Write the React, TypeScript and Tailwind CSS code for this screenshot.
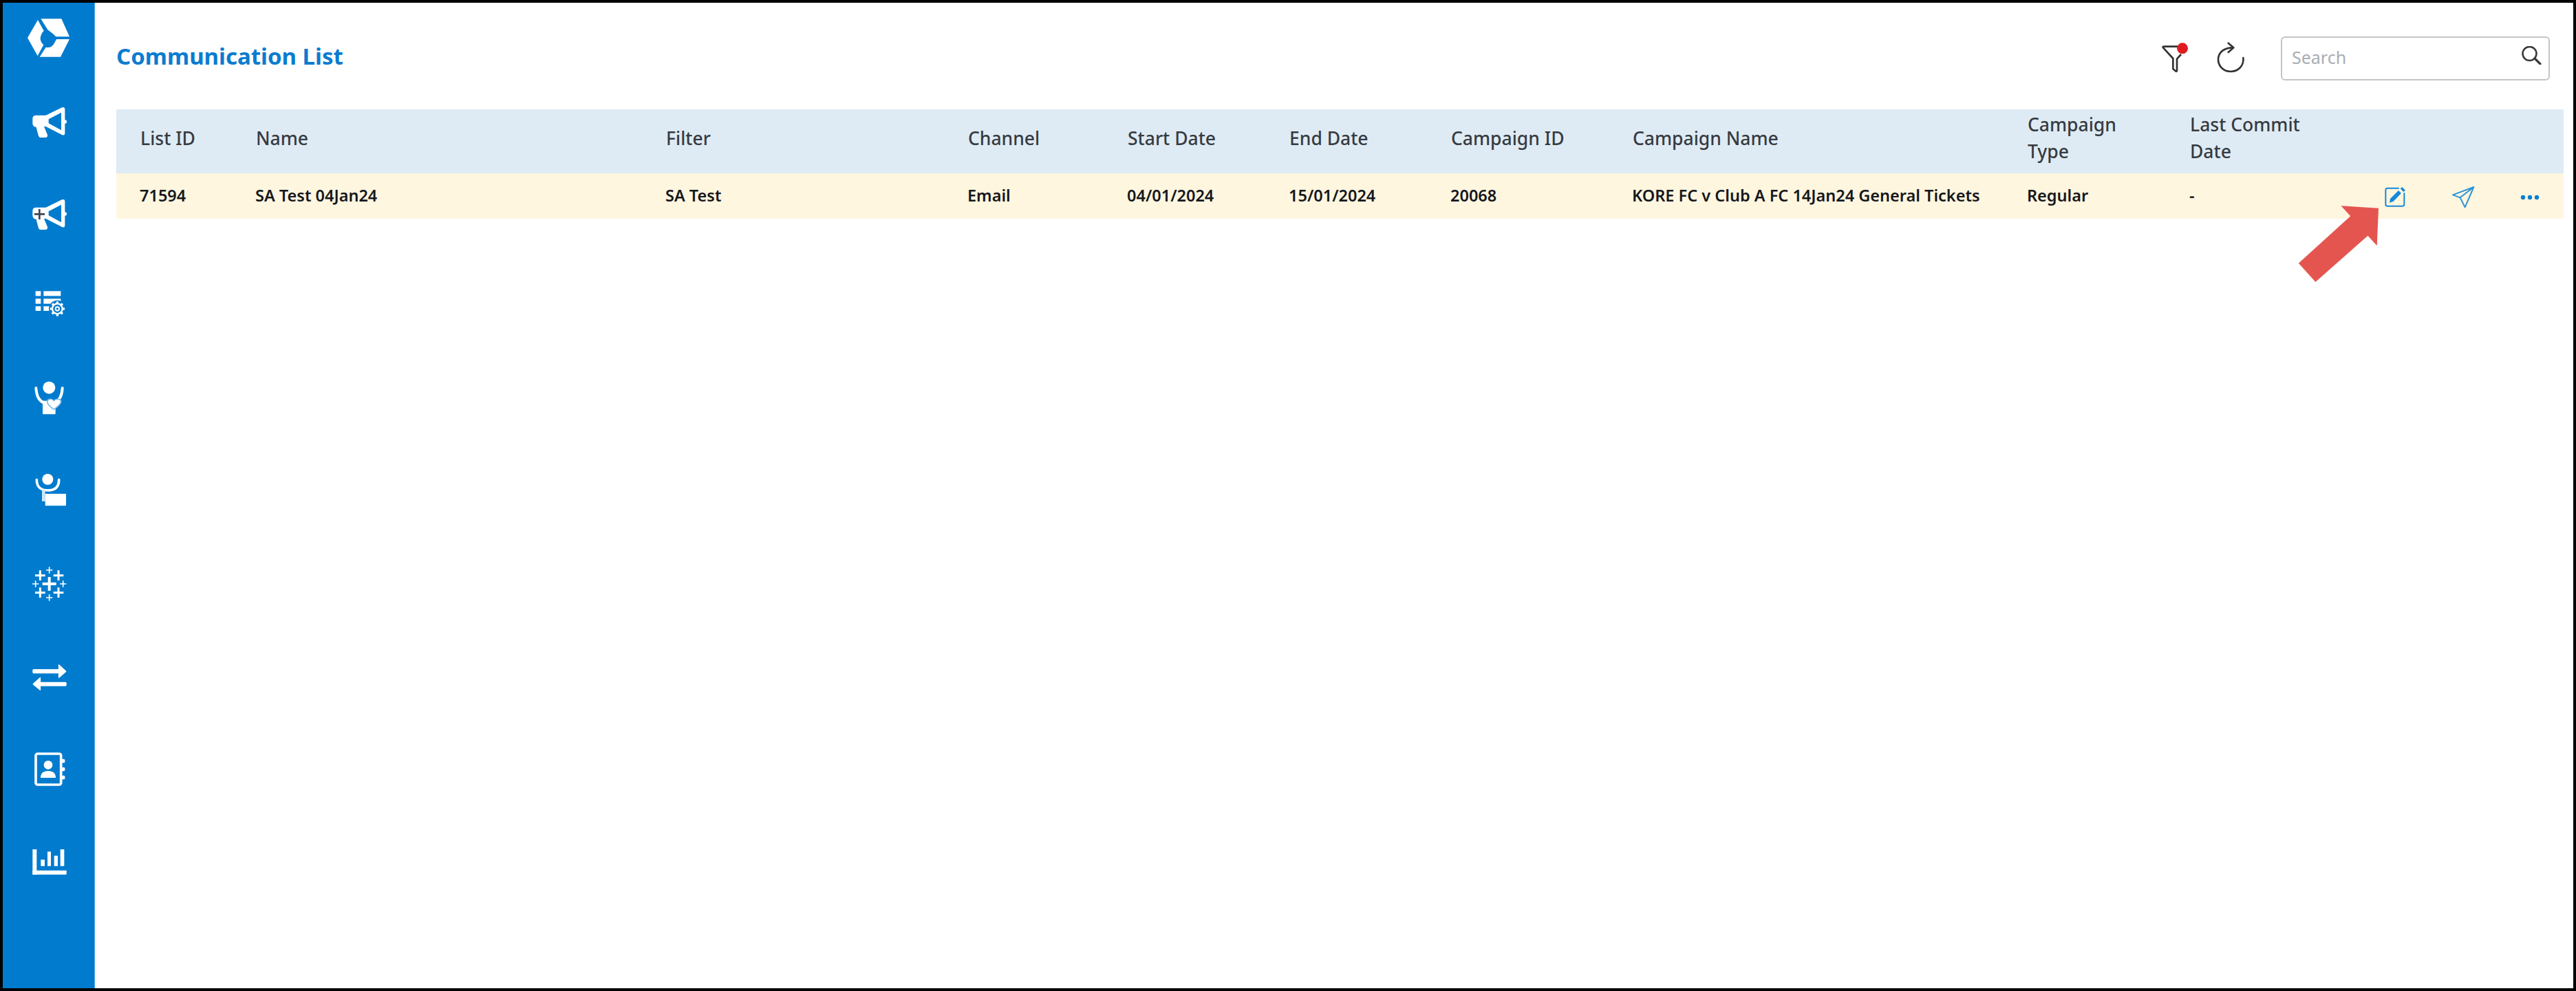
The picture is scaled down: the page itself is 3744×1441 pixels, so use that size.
const Megaphone = ({ plus }: { plus?: boolean }) => (
  <svg width="64" height="45" viewBox="117 465 192 135" className="block">
    <path
      fill="#fff"
      d="M142 518 Q142 503 157 503 L205 503 L205 552 L192 552 L207 588 Q209 600 197 600 L178 600 Q170 600 167 590 L158 555 Q142 553 142 538 Z"
    />
    <path
      fill="#fff"
      fillRule="evenodd"
      d="M200 503 L270 469 Q283 464 283 478 L283 580 Q283 594 270 588 L200 552 Z M212 520 L267 491 L267 568 L212 538 Z"
    />
    <circle cx="283" cy="531" r="8" fill="#fff" />
    {plus && (
      <path d="M150 532 H195 M172 510 V555" stroke="#3d4650" strokeWidth="8" fill="none" />
    )}
  </svg>
);

const Logo = () => (
  <svg width="64" height="56" viewBox="117 81 192 168" className="block">
    <path fill="#fff" d="M120 165 L165 87 L191 134 Q176 150 176 170 Q178 185 190 196 L164 244 Z" />
    <path fill="#fff" d="M178 82 L268 82 L303 160 L244 160 Q226 142 208 130 Z" />
    <path fill="#fff" d="M303 171 L264 248 L173 248 L200 206 Q222 210 232 196 Q240 184 246 171 Z" />
  </svg>
);

const ListGear = () => {
  const angles = [0, 45, 90, 135, 180, 225, 270, 315];
  return (
    <svg width="64" height="41" viewBox="117 1270 192 123" className="block">
      <g fill="#fff">
        <rect x="155" y="1277" width="23" height="21" />
        <rect x="155" y="1310" width="23" height="22" />
        <rect x="155" y="1343" width="23" height="20" />
        <rect x="190" y="1277" width="75" height="21" />
        <rect x="190" y="1310" width="75" height="22" />
        <rect x="190" y="1343" width="40" height="20" />
      </g>
      <circle cx="250" cy="1354" r="37" fill="#007bce" />
      <g stroke="#fff" fill="none">
        {angles.map((a) => (
          <line key={a} x1="250" y1="1332" x2="250" y2="1322" strokeWidth="10" transform={`rotate(${a} 250 1354)`} />
        ))}
        <circle cx="250" cy="1354" r="22" strokeWidth="7" />
        <circle cx="250" cy="1354" r="8" strokeWidth="6" />
      </g>
    </svg>
  );
};

const PersonHeart = () => (
  <svg width="64" height="49" viewBox="117 164 192 147" className="block">
    <circle cx="214" cy="193" r="27" fill="#fff" />
    <path d="M157 195 C160 232 170 250 192 260 M272 195 C270 232 258 250 238 260" stroke="#fff" strokeWidth="12" fill="none" strokeLinecap="round" />
    <rect x="186" y="250" width="56" height="59" rx="3" fill="#fff" />
    <path
      d="M235 288 C215 274 206 264 206 254 C206 242 224 238 235 250 C246 238 266 242 266 254 C266 264 255 274 235 288 Z"
      fill="#fff"
      stroke="#79b9e8"
      strokeWidth="5"
    />
  </svg>
);

const PersonBox = () => (
  <svg width="64" height="48" viewBox="117 565 192 144" className="block">
    <circle cx="208" cy="592" r="24" fill="#fff" />
    <path d="M160 594 C160 630 185 640 208 640 C235 640 257 630 257 594" stroke="#fff" strokeWidth="11" fill="none" strokeLinecap="round" />
    <rect x="183" y="638" width="14" height="50" fill="#cfe6f7" />
    <rect x="197" y="655" width="91" height="52" fill="#fff" />
  </svg>
);

const Tableau = () => {
  const p = (x: number, y: number, s: number) => `M${x - s} ${y} H${x + s} M${x} ${y - s} V${y + s}`;
  return (
    <svg width="64" height="50" viewBox="117 975 192 150" className="block">
      <g stroke="#fff" fill="none">
        <path d={p(215, 1050, 30)} strokeWidth="12" />
        <path d={[p(175, 1013, 22), p(255, 1013, 22), p(175, 1088, 22), p(255, 1088, 22)].join(' ')} strokeWidth="9" />
        <path d={[p(215, 990, 14), p(155, 1050, 14), p(275, 1050, 14), p(215, 1110, 14)].join(' ')} strokeWidth="5" />
      </g>
    </svg>
  );
};

const Arrows = () => (
  <svg width="64" height="38" viewBox="117 1400 192 115" className="block">
    <path fill="#fff" d="M146 1421 H255 V1402 Q256 1398 260 1402 L288 1428 Q291 1431 288 1434 L260 1458 Q256 1462 255 1458 V1440 H146 Q141 1440 141 1430 Q141 1421 146 1421 Z" />
    <path fill="#fff" d="M286 1478 H177 V1459 Q176 1455 172 1459 L144 1484 Q141 1487 144 1490 L172 1513 Q176 1517 177 1513 V1496 H286 Q291 1496 291 1487 Q291 1478 286 1478 Z" />
  </svg>
);

const AddressBook = () => (
  <svg width="64" height="49" viewBox="117 285 192 147" className="block">
    <rect x="156" y="291" width="110" height="135" rx="8" fill="none" stroke="#fff" strokeWidth="11" />
    <rect x="268" y="314" width="15" height="17" rx="5" fill="#fff" />
    <rect x="268" y="350" width="15" height="17" rx="5" fill="#fff" />
    <rect x="268" y="386" width="15" height="17" rx="5" fill="#fff" />
    <circle cx="210" cy="340" r="19" fill="#fff" />
    <path d="M177 396 Q177 366 210 366 Q243 366 243 396 Z" fill="#fff" />
  </svg>
);

const BarChart = () => (
  <svg width="64" height="37" viewBox="117 705 192 111" className="block">
    <g fill="#fff">
      <rect x="142" y="705" width="18" height="110" />
      <rect x="142" y="797" width="148" height="18" rx="2" />
      <rect x="178" y="750" width="17" height="28" />
      <rect x="207" y="715" width="15" height="63" />
      <rect x="236" y="733" width="16" height="45" />
      <rect x="263" y="705" width="17" height="73" />
    </g>
  </svg>
);

const FilterIcon = () => (
  <svg width="40" height="46" viewBox="118 88 120 138" className="block">
    <path d="M127 113 Q122 108 132 108 H195 M205 142 L187 162 V212 Q187 220 180 214 L170 206 V160 L127 113" fill="none" stroke="#333" strokeWidth="8" strokeLinejoin="round" />
    <circle cx="211" cy="116" r="24" fill="#e01b1f" />
  </svg>
);

const RefreshIcon = () => (
  <svg width="42" height="46" viewBox="360 92 126 138" className="block">
    <path d="M478 164 C482 200 455 224 423 224 C392 224 368 200 369 170 C370 140 395 120 432 120" fill="none" stroke="#333" strokeWidth="8" strokeLinecap="round" />
    <path d="M413 100 L436 120 L413 140" fill="none" stroke="#333" strokeWidth="8" strokeLinecap="round" strokeLinejoin="round" />
  </svg>
);

const SearchIcon = () => (
  <svg width="30" height="27" viewBox="0 0 30 27" className="block">
    <circle cx="12.5" cy="11" r="10" fill="none" stroke="#3a3a3a" strokeWidth="2.6" />
    <path d="M20 18 L28 26" stroke="#3a3a3a" strokeWidth="3.2" strokeLinecap="round" />
  </svg>
);

const EditIcon = () => (
  <svg width="31" height="30" viewBox="198 128 93 90" className="block">
    <path d="M258 133 H209 Q202 133 202 140 V204 Q202 211 209 211 H276 Q283 211 283 204 V155" fill="none" stroke="#1488d8" strokeWidth="6" strokeLinecap="round" />
    <path d="M219 196 L222 179 L258 143 L270 155 L235 191 Z" fill="#1488d8" />
    <path d="M266 135 L274 128 L288 142 L280 149 Z" fill="#1488d8" />
  </svg>
);

const SendIcon = () => (
  <svg width="34" height="34" viewBox="486 120 102 102" className="block">
    <path d="M492 160 L583 126 L545 214 L524 172 Z M524 172 L583 126" fill="none" stroke="#2a93d8" strokeWidth="6" strokeLinejoin="round" />
  </svg>
);

const DotsIcon = () => (
  <svg width="28" height="8" viewBox="0 0 28 8" className="block">
    <circle cx="4" cy="4" r="3.2" fill="#0a7fd0" />
    <circle cx="14" cy="4" r="3.2" fill="#0a7fd0" />
    <circle cx="24" cy="4" r="3.2" fill="#0a7fd0" />
  </svg>
);

const headers = ['List ID', 'Name', 'Filter', 'Channel', 'Start Date', 'End Date', 'Campaign ID', 'Campaign Name'];
const cells = ['71594', 'SA Test 04Jan24', 'SA Test', 'Email', '04/01/2024', '15/01/2024', '20068', 'KORE FC v Club A FC 14Jan24 General Tickets', 'Regular', '-'];

export default function App() {
  return (
    <div className="relative flex h-[1441px] w-[3744px] overflow-hidden border-4 border-black bg-white font-['Noto_Sans',sans-serif]">
      <aside className="flex h-full w-[134px] shrink-0 flex-col items-center border-r border-[#4da6e6] bg-[#007bce] pt-[23px]">
        <Logo />
        <div className="mt-[72px]"><Megaphone /></div>
        <div className="mt-[89px]"><Megaphone plus /></div>
        <div className="mt-[87px]"><ListGear /></div>
        <div className="mt-[92px]"><PersonHeart /></div>
        <div className="mt-[85px]"><PersonBox /></div>
        <div className="mt-[88px]"><Tableau /></div>
        <div className="mt-[92px]"><Arrows /></div>
        <div className="mt-[90px]"><AddressBook /></div>
        <div className="mt-[92px]"><BarChart /></div>
      </aside>

      <main className="flex min-w-0 flex-1 flex-col pl-[31px] pr-[14px]">
        <header className="flex h-[155px] shrink-0 items-start justify-between">
          <h1 className="mt-[57px] text-[33px] font-bold leading-[42px] text-[#0a7cd0]">Communication List</h1>
          <div className="mr-[20px] mt-[49px] flex items-start">
            <div className="ml-[4px] mt-[8px]"><FilterIcon /></div>
            <div className="ml-[40px] mt-[7px]"><RefreshIcon /></div>
            <div className="ml-[52px] flex h-[64px] w-[391px] items-center justify-between rounded-md border-2 border-[#c4c4c4] pl-[14px] pr-[10px]">
              <span className="mb-[3px] text-[25px] text-[#a9adb3]">Search</span>
              <div className="mb-[10px]"><SearchIcon /></div>
            </div>
          </div>
        </header>

        <table className="w-full table-fixed border-collapse">
          <colgroup>
            <col className="w-[168px]" />
            <col className="w-[596px]" />
            <col className="w-[439px]" />
            <col className="w-[232px]" />
            <col className="w-[235px]" />
            <col className="w-[235px]" />
            <col className="w-[264px]" />
            <col className="w-[574px]" />
            <col className="w-[236px]" />
            <col className="w-[270px]" />
            <col />
          </colgroup>
          <thead>
            <tr className="h-[93px] bg-[#dfebf4]">
              {headers.map((h) => (
                <th key={h} className="pb-[9px] pl-[35px] text-left text-[26.5px] font-medium leading-[39px] text-[#363b42]">{h}</th>
              ))}
              <th className="pb-[9px] pl-[35px] text-left text-[26.5px] font-medium leading-[39px] text-[#363b42]"><div className="w-[130px]">Campaign Type</div></th>
              <th className="pb-[9px] pl-[35px] text-left text-[26.5px] font-medium leading-[39px] text-[#363b42]"><div className="w-[180px]">Last Commit Date</div></th>
              <th />
            </tr>
          </thead>
          <tbody>
            <tr className="h-[66px] bg-[#fff6e0]">
              {cells.map((c, i) => (
                <td key={i} className="whitespace-nowrap pl-[34px] text-[23.5px] font-semibold text-[#15181c]">{c}</td>
              ))}
              <td className="pr-[35px] pt-[4px]">
                <div className="flex items-center justify-end gap-[66px]">
                  <EditIcon />
                  <SendIcon />
                  <DotsIcon />
                </div>
              </td>
            </tr>
          </tbody>
        </table>
      </main>

      <svg width="118" height="112" viewBox="3340 299 118 112" className="absolute left-[3336px] top-[295px]">
        <path fill="#e5554f" d="M3402.5 299.3 L3457 302.7 L3454.7 357.3 L3441.4 342.7 L3365.4 410 L3340.8 382.7 L3416.2 314.3 Z" />
      </svg>
    </div>
  );
}
